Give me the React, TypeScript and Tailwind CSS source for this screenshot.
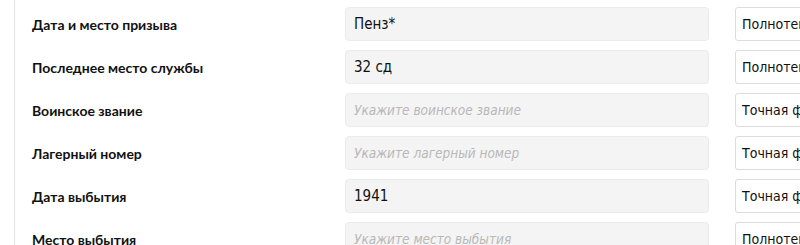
const rows = [
  { label: 'Дата и место призыва', value: 'Пенз*', placeholder: '', mode: 'Полнотекстовый поиск' },
  { label: 'Последнее место службы', value: '32 сд', placeholder: '', mode: 'Полнотекстовый поиск' },
  { label: 'Воинское звание', value: '', placeholder: 'Укажите воинское звание', mode: 'Точная фраза' },
  { label: 'Лагерный номер', value: '', placeholder: 'Укажите лагерный номер', mode: 'Точная фраза' },
  { label: 'Дата выбытия', value: '1941', placeholder: '', mode: 'Точная фраза' },
  { label: 'Место выбытия', value: '', placeholder: 'Укажите место выбытия', mode: 'Полнотекстовый поиск' },
]

export default function App() {
  return (
    <div className="w-[800px] h-[245px] overflow-hidden bg-white">
      <div className="ml-[14px] h-full border-l border-[#e2e2e2] pl-[17px] pt-[7px] flex flex-col gap-[9px]">
        {rows.map((r) => (
          <div key={r.label} className="flex items-center h-[34px] shrink-0">
            <div className="w-[313px] shrink-0 font-['Lato',sans-serif] font-bold text-[14px] text-[#111]">
              {r.label}
            </div>
            <div className="w-[364px] shrink-0 h-[34px] rounded-[4px] bg-[#f4f4f4] border border-[#ebebeb] flex items-center pl-[8px] font-['DejaVu_Sans_Condensed','DejaVu_Sans',sans-serif]">
              {r.value ? (
                <span className="text-[15px] text-[#111]">{r.value}</span>
              ) : (
                <span className="text-[13.5px] italic text-[#b8b8b8]">{r.placeholder}</span>
              )}
            </div>
            <div className="ml-[26px] w-[200px] shrink-0 h-[34px] rounded-[3px] bg-white border border-[#dcdcdc] flex items-center pl-[6px] font-['DejaVu_Sans_Condensed','DejaVu_Sans',sans-serif] text-[14px] text-[#111] whitespace-nowrap overflow-hidden">
              {r.mode}
            </div>
          </div>
        ))}
      </div>
    </div>
  )
}
